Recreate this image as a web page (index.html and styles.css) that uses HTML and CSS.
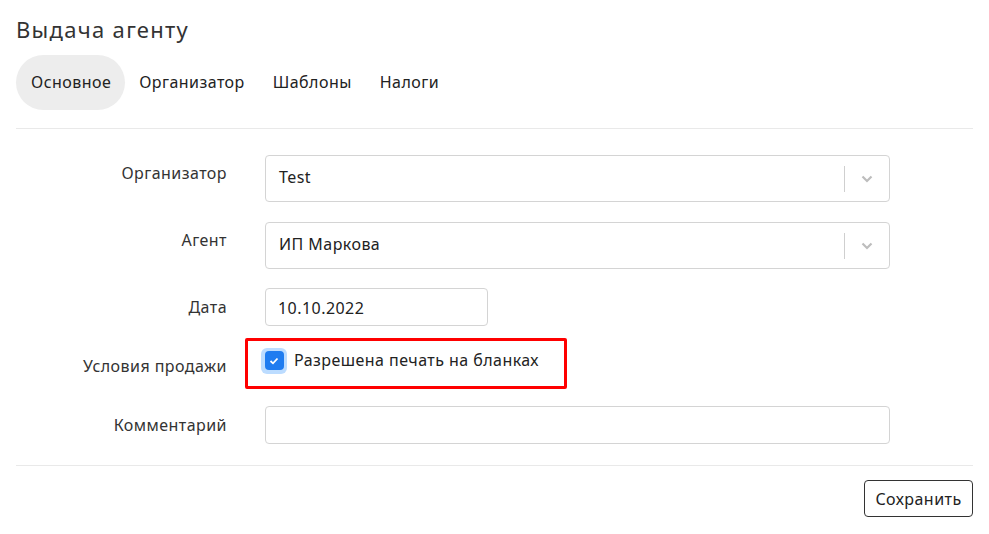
FILE: index.html
```html
<!DOCTYPE html>
<html lang="ru">
<head>
<meta charset="utf-8">
<link rel="stylesheet" href="styles.css">
</head>
<body>
<div class="page">
  <h1 class="title">Выдача агенту</h1>
  <nav class="tabs">
    <span class="tab active">Основное</span>
    <span class="tab">Организатор</span>
    <span class="tab">Шаблоны</span>
    <span class="tab">Налоги</span>
  </nav>
  <div class="divider top"></div>
  <form class="form">
    <div class="row row-select">
      <label class="label">Организатор</label>
      <div class="select">
        <span class="value">Test</span>
        <span class="sep"></span>
        <svg class="chev" width="12" height="8" viewBox="0 0 12 8"><path d="M1.5 1.5 L6 6 L10.5 1.5" fill="none" stroke="#bdbdbd" stroke-width="2.2"/></svg>
      </div>
    </div>
    <div class="row row-select">
      <label class="label">Агент</label>
      <div class="select">
        <span class="value">ИП Маркова</span>
        <span class="sep"></span>
        <svg class="chev" width="12" height="8" viewBox="0 0 12 8"><path d="M1.5 1.5 L6 6 L10.5 1.5" fill="none" stroke="#bdbdbd" stroke-width="2.2"/></svg>
      </div>
    </div>
    <div class="row row-date">
      <label class="label">Дата</label>
      <div class="input date">10.10.2022</div>
    </div>
    <div class="row row-check">
      <label class="label">Условия продажи</label>
      <div class="highlight">
        <span class="check-ring"><span class="check-box"><svg width="10" height="8" viewBox="0 0 10 8"><path d="M1.5 4 L4 6.3 L8.5 1.5" fill="none" stroke="#fff" stroke-width="1.8"/></svg></span></span>
        <span class="check-text">Разрешена печать на бланках</span>
      </div>
    </div>
    <div class="row row-comment">
      <label class="label">Комментарий</label>
      <div class="input comment"></div>
    </div>
  </form>
  <div class="divider bottom"></div>
  <div class="actions">
    <button type="button" class="btn">Сохранить</button>
  </div>
</div>
</body>
</html>
```
FILE: styles.css
```css
* { box-sizing: border-box; }
html, body { margin: 0; padding: 0; background: #fff; }
body {
  font-family: "Noto Sans", "Open Sans", sans-serif;
  color: #222;
  font-size: 16px;
  letter-spacing: 0.45px;
}
.page { padding: 0 16px; width: 989px; }
.title {
  margin: 0;
  padding-top: 14px;
  height: 55px;
  font-size: 22px;
  font-weight: 400;
  color: #333;
  line-height: 30px;
  letter-spacing: 1.3px;
}
.tabs { display: flex; align-items: center; height: 55px; }
.tab {
  padding: 0 14px;
  height: 55px;
  line-height: 55px;
  border-radius: 28px;
  color: #222;
  font-size: 16px;
}
.tab.active { background: #ededed; padding: 0 14px 0 15px; }
.divider { height: 1px; background: #e9e9e9; }
.divider.top { margin-top: 18px; }
.form { padding-top: 26px; }
.row { display: flex; align-items: center; }
.label {
  width: 211px;
  text-align: right;
  color: #333;
  font-size: 16px;
  flex: none;
}
.row-select { height: 47px; margin-bottom: 20px; }
.row-select .label { align-self: flex-start; padding-top: 7px; }
.select {
  margin-left: 38px;
  width: 625px;
  height: 47px;
  border: 1px solid #d4d4d4;
  border-radius: 4px;
  display: flex;
  align-items: center;
  padding-left: 13px;
  padding-bottom: 3px;
}
.select .value { flex: 1; color: #222; }
.sep { width: 1px; height: 26px; background: #cfcfcf; margin-top: 3px; }
.chev { margin: 3px 16px 0 16px; }
.row-date { height: 38px; margin-top: -1px; }
.input {
  margin-left: 38px;
  height: 38px;
  border: 1px solid #d4d4d4;
  border-radius: 4px;
  display: flex;
  align-items: center;
  padding-left: 12px;
  color: #222;
}
.date { width: 223px; padding-top: 2px; }
.row-check { height: 51px; margin-top: 12px; }
.row-check .label { padding-top: 5px; }
.highlight {
  margin-left: 18px;
  width: 322px;
  height: 51px;
  border: 3px solid #f00;
  border-radius: 2px;
  display: flex;
  align-items: center;
  padding-left: 13px;
  padding-bottom: 8px;
}
.check-ring {
  width: 26px;
  height: 26px;
  border-radius: 6px;
  background: #bcdcff;
  display: flex;
  align-items: center;
  justify-content: center;
  flex: none;
  margin-top: 2px;
}
.check-box {
  width: 19px;
  height: 19px;
  border-radius: 4px;
  background: #1f7cf0;
  display: flex;
  align-items: center;
  justify-content: center;
}
.check-text { margin-left: 7px; color: #222; }
.row-comment { height: 38px; margin-top: 17px; }
.comment { width: 625px; }
.divider.bottom { margin-top: 21px; }
.actions { display: flex; justify-content: flex-end; padding-top: 14px; }
.btn {
  font-family: inherit;
  font-size: 16px;
  letter-spacing: 0.45px;
  color: #222;
  background: #fff;
  border: 1px solid #333;
  border-radius: 4px;
  height: 37px;
  width: 109px;
  padding: 0;
}
```
